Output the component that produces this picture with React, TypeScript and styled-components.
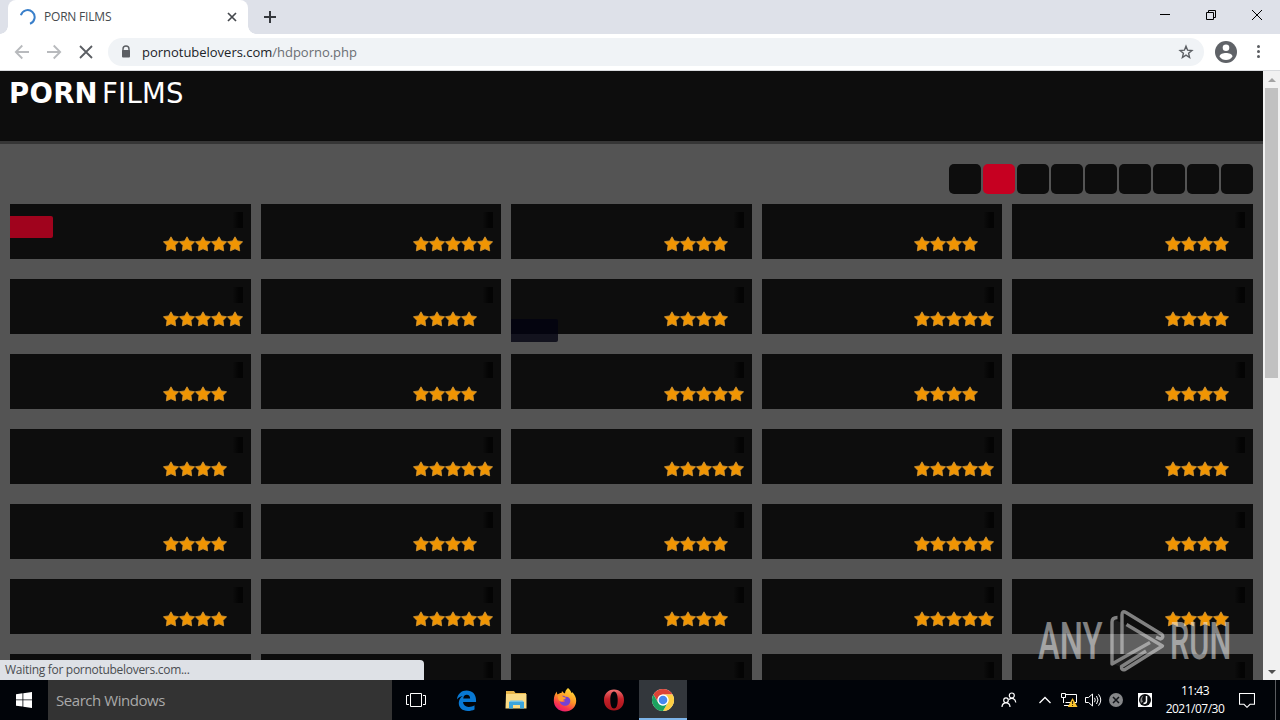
import React from "react";
import styled, { createGlobalStyle } from "styled-components";

const UI_FONT = `"Open Sans", "Noto Sans", sans-serif`;

const GlobalStyle = createGlobalStyle`
    * {
        box-sizing: border-box;
    }

    body {
        margin: 0;
        overflow: hidden;
        font-family: ${UI_FONT};
    }

    svg {
        display: block;
        flex: none;
    }
`;

const Desktop = styled.div`
    position: relative;
    display: flex;
    flex-direction: column;
    width: 1280px;
    height: 720px;
    overflow: hidden;
    background: #000;
`;

const TabStrip = styled.div`
    display: flex;
    flex: 0 0 34px;
    padding-left: 8px;
    background: #dee1e9;
`;

const Tab = styled.div`
    position: relative;
    display: flex;
    align-items: center;
    width: 240px;
    padding: 0 10px 0 12px;
    border-radius: 8px 8px 0 0;
    background: #fff;

    &::before,
    &::after {
        content: "";
        position: absolute;
        bottom: 0;
        width: 8px;
        height: 8px;
    }

    &::before {
        left: -8px;
        background: radial-gradient(circle at 0 0, #dee1e9 7.5px, #fff 8px);
    }

    &::after {
        right: -8px;
        background: radial-gradient(circle at 100% 0, #dee1e9 7.5px, #fff 8px);
    }
`;

const TabTitle = styled.span`
    flex: 1;
    padding-left: 8px;
    font-size: 12px;
    line-height: 16px;
    letter-spacing: -0.2px;
    white-space: nowrap;
    color: #45494d;
`;

const NewTab = styled.div`
    display: flex;
    align-items: center;
    padding-left: 16px;
`;

const WindowControls = styled.div`
    display: flex;
    height: 29px;
    margin-left: auto;
`;

const WindowControl = styled.div`
    display: flex;
    align-items: center;
    justify-content: center;
    width: 46px;
`;

const Toolbar = styled.div`
    display: flex;
    align-items: center;
    flex: 0 0 37px;
    padding: 0 14px 1px 14px;
    border-bottom: 1px solid #d8dadd;
    background: #fff;
`;

const NavButtons = styled.div`
    display: flex;
    gap: 16px;
`;

const AddressBar = styled.div`
    display: flex;
    align-items: center;
    flex: 1;
    height: 28px;
    margin: 0 11px 0 14px;
    padding: 0 10px 0 12px;
    border-radius: 14px;
    background: #f0f3f6;
`;

const Url = styled.span`
    flex: 1;
    padding-left: 10px;
    font-size: 13px;
    line-height: 18px;
    letter-spacing: -0.02px;
    white-space: nowrap;
    color: #6a6e73;
`;

const UrlHost = styled.span`
    color: #202328;
`;

const MenuDots = styled.div`
    display: flex;
    flex-direction: column;
    gap: 2px;
    margin-left: 20px;
    padding-right: 6px;
`;

const MenuDot = styled.i`
    width: 3px;
    height: 3px;
    border-radius: 50%;
    background: #5a5d61;
`;

const Viewport = styled.div`
    display: flex;
    flex: 1;
    min-height: 0;
`;

const Site = styled.main`
    flex: 1;
    min-width: 0;
    overflow: hidden;
    background: #545454;
`;

const SiteHeader = styled.header`
    height: 73px;
    padding: 6px 8px;
    border-bottom: 3px solid #363636;
    background: #0d0d0d;
`;

const SiteLogo = styled.div`
    display: flex;
    gap: 4px;
    padding-left: 1px;
    font-family: "DejaVu Sans", sans-serif;
    font-size: 27.5px;
    line-height: 32px;
    color: #fff;
`;

const LogoStrong = styled.b`
    letter-spacing: 0.3px;
`;

const LogoLight = styled.span`
    letter-spacing: 0.3px;
`;

const Pagination = styled.nav`
    display: flex;
    justify-content: flex-end;
    gap: 2px;
    padding: 20px 10px 10px;
`;

const PageButton = styled.span<{ $active?: boolean }>`
    width: 32px;
    height: 30px;
    border-radius: 5px;
    background: ${({ $active }) => ($active ? "#c60021" : "#0d0d0d")};
`;

const CardGrid = styled.section`
    display: grid;
    grid-template-columns: repeat(5, 1fr);
    gap: 20px 10px;
    padding: 0 10px;
`;

const Card = styled.article`
    position: relative;
    display: flex;
    flex-direction: column;
    align-items: flex-end;
    height: 55px;
    padding: 8px 8px 0 0;
    background: #0d0d0d;
`;

const Duration = styled.div`
    width: 10px;
    height: 16px;
    background: linear-gradient(90deg, #0c0c0c, #040404 60%);
`;

const Rating = styled.div`
    display: flex;
    width: 80px;
    margin-top: 8px;
`;

const CardLabel = styled.div<{ $tone: "red" | "navy" }>`
    position: absolute;
    left: 0;
    top: ${({ $tone }) => ($tone === "red" ? 12 : 40)}px;
    width: ${({ $tone }) => ($tone === "red" ? 43 : 47)}px;
    height: ${({ $tone }) => ($tone === "red" ? 22 : 23)}px;
    border-radius: 0 2px 2px 0;
    background: ${({ $tone }) => ($tone === "red" ? "#a0031d" : "rgba(2, 3, 16, 0.8)")};
`;

const Scrollbar = styled.div`
    display: flex;
    flex-direction: column;
    align-items: center;
    flex: 0 0 17px;
    background: #f1f1f1;
`;

const ScrollArrow = styled.div`
    display: flex;
    align-items: center;
    justify-content: center;
    height: 17px;
`;

const ScrollThumb = styled.div`
    width: 13px;
    height: 290px;
    margin-bottom: auto;
    background: #c1c1c1;
`;

const StatusBubble = styled.div`
    position: absolute;
    left: 0;
    bottom: 40px;
    width: 424px;
    height: 20px;
    padding-left: 5px;
    border-radius: 0 4px 0 0;
    background: #dee1e6;
    font-size: 12px;
    line-height: 20px;
    letter-spacing: -0.29px;
    color: #4a4d51;
`;

const Watermark = styled.div`
    position: absolute;
    left: 1038px;
    top: 609px;
    display: flex;
    opacity: 0.5;
`;

const WatermarkWord = styled.span<{ $width: number; $scale: number }>`
    display: block;
    width: ${({ $width }) => $width}px;
    font-family: Roboto, sans-serif;
    font-size: 52px;
    font-weight: 500;
    line-height: 66px;
    white-space: nowrap;
    color: #f4f4f4;
    transform: scaleX(${({ $scale }) => $scale});
    transform-origin: 0 0;
`;

const WatermarkMark = styled.div`
    margin: 0 4px 0 8px;
`;

const Taskbar = styled.footer`
    display: flex;
    flex: 0 0 40px;
    background: #010409;
`;

const TaskButton = styled.div<{ $active?: boolean }>`
    display: flex;
    align-items: center;
    justify-content: center;
    width: ${({ $active }) => ($active ? 48 : 49)}px;
    margin-left: ${({ $active }) => ($active ? 1 : 0)}px;
    border-bottom: ${({ $active }) => ($active ? "2px solid #7db4e8" : "none")};
    padding-top: ${({ $active }) => ($active ? 2 : 0)}px;
    background: ${({ $active }) => ($active ? "#33373c" : "transparent")};
`;

const StartButton = styled(TaskButton)`
    width: 48px;
`;

const TaskViewButton = styled(TaskButton)`
    width: 48px;
    margin-right: 2px;
`;

const SearchBox = styled.div`
    width: 344px;
    padding-left: 8px;
    background: #333;
    font-size: 15px;
    line-height: 40px;
    letter-spacing: -0.45px;
    color: #a9a9a9;
`;

const Tray = styled.div`
    display: flex;
    align-items: center;
    margin-left: auto;
`;

const TrayIcon = styled.div<{ $gap: number }>`
    margin-right: ${({ $gap }) => $gap}px;
`;

const Clock = styled.div`
    width: 60px;
    margin-right: 14px;
    font-size: 12px;
    line-height: 18px;
    letter-spacing: -0.5px;
    text-align: center;
    white-space: nowrap;
    color: #fff;
`;

const ShowDesktop = styled.div`
    width: 5px;
    height: 40px;
    border-left: 1px solid #5a5c60;
`;

const Star = () => (
    <svg width="16" height="16" viewBox="0 0 16 16">
        <path
            d="M8 .8 10.400 4.900 15.600 5.700 12 9.500 12.700 14.900 8 12.800 3.300 14.900 4 9.500 .4 5.700 5.600 4.900Z"
            fill="#f09503"
            stroke="#cf9538"
            strokeWidth=".8"
        />
    </svg>
);

const EdgeIcon = () => (
    <svg width="21" height="21" viewBox="0 0 22 22">
        <path
            d="M1 10C1.500 4 6 .5 11 .5c6 0 10 4 10 10v2.200H7.400c.2 3.200 2.600 5 6 5 2.300 0 4.300-.7 6-1.700v4.300c-2 1-4.300 1.600-7 1.600-5.800 0-9.500-3.400-9.500-8.300 0-3 1.600-5.700 4.200-7.300C4.400 6.900 2.400 8 1 10Zm6.600-1.100h7.200c0-2.500-1.300-4-3.500-4s-3.600 1.700-3.700 4Z"
            fill="#0878d3"
        />
    </svg>
);

const FolderIcon = () => (
    <svg width="22" height="20" viewBox="0 0 22 20">
        <path d="M1 1h8l1.500 2H21v4H1Z" fill="#e8b64a" />
        <path d="M1 4h20.500v14.500H.5Z" fill="#fbdc86" />
        <path d="M4 12h15v6.500h-4V15H8v3.500H4Z" fill="#3ba5dd" />
        <path d="M4 12h15l-1.500-1.500h-12Z" fill="#72c4e9" />
    </svg>
);

const FirefoxIcon = () => (
    <svg width="24" height="24" viewBox="0 0 24 24">
        <defs>
            <linearGradient id="fox" x1=".8" y1="0" x2=".3" y2="1">
                <stop offset="0" stopColor="#ffe33b" />
                <stop offset=".48" stopColor="#ff9526" />
                <stop offset=".78" stopColor="#fa374c" />
                <stop offset="1" stopColor="#e51776" />
            </linearGradient>
        </defs>
        <path
            d="M15 0c2 1.600 3 3.200 3.500 5l1-.7c2.200 2.400 3.700 5.200 3.700 8.400C23.200 19 18.400 23.500 12 23.500S.8 19 .8 12.600c0-3.800 1-6.500 3-9 0 1.300.3 2.200.8 3C5.600 5.500 7 5 8.500 5L9 3c.8 1 1.700 2 3 2.500C12 3.500 13.200 1.500 15 0Z"
            fill="url(#fox)"
        />
        <path d="M9 8c1.300-.5 2.500 0 3.200.8C15 8.200 17.500 10 17.300 12.800c0 3-2.300 5-5.200 5-3.500 0-5.400-2.500-5.300-5 1.600 1.600 3.800 1.600 5.400.2-1.700-.2-2.700-1.600-3.200-5Z" fill="#7542d3" />
        <path d="M5 8c2-1 4.300-.6 5.700 1l2.200.8c-.4 1.500-2 1.600-2.800 2.200.2 1.200-1.600 1.700-3 1.200-1.500-.6-2.400-2.500-2.100-5.200Z" fill="#ff9d2d" />
    </svg>
);

const OperaIcon = () => (
    <svg width="22" height="22" viewBox="0 0 22 22">
        <defs>
            <linearGradient id="opera" x1="0" y1="0" x2="0" y2="1">
                <stop offset="0" stopColor="#f17474" />
                <stop offset=".45" stopColor="#c52129" />
                <stop offset="1" stopColor="#a5141b" />
            </linearGradient>
        </defs>
        <path
            d="M11 .5c6 0 10 4.500 10 10.500s-4 10.500-10 10.500S1 17 1 11 5 .5 11 .5Zm0 2C8.600 2.500 7.300 6 7.300 11s1.300 8.500 3.700 8.500 3.700-3.500 3.700-8.500-1.300-8.500-3.700-8.500Z"
            fill="url(#opera)"
            fillRule="evenodd"
        />
    </svg>
);

const ChromeIcon = () => (
    <svg width="24" height="24" viewBox="0 0 24 24">
        <circle cx="12" cy="12" r="11" fill="#fff" />
        <path d="M12 1a11 11 0 0 1 9.530 5.500H12A5.500 5.500 0 0 0 7.240 14.750L2.470 6.500A11 11 0 0 1 12 1Z" fill="#dc4437" />
        <path d="M21.530 6.500A11 11 0 0 1 12 23l4.760-8.250A5.500 5.500 0 0 0 12 6.500Z" fill="#fdce43" />
        <path d="M12 23A11 11 0 0 1 2.470 6.500l4.770 8.250a5.500 5.500 0 0 0 9.520 0Z" fill="#1ba260" />
        <circle cx="12" cy="12" r="5.500" fill="#fff" />
        <circle cx="12" cy="12" r="4.300" fill="#4788ef" />
    </svg>
);

const PlayMark = () => (
    <svg
        width="58"
        height="66"
        viewBox="0 0 58 66"
        fill="none"
        stroke="#f4f4f4"
        strokeWidth="3.400"
        strokeLinejoin="round"
    >
        <path d="M18 16 55 37 16 59 5 55V10Z" fill="#fff" fillOpacity=".14" stroke="none" />
        <path d="M9.500 8.500Q4 8.500 4 13v42L42 33.500" />
        <path d="M14 45V6q0-5 4-2.500l36 22q2 3-1.500 4.500L48 28" />
        <path d="M18.500 15.500 54.500 37 17 60.500q-4 1-3.500-3L38 42" />
    </svg>
);

const ratings = [
    [5, 5, 4, 4, 4],
    [5, 4, 4, 5, 4],
    [4, 4, 5, 4, 4],
    [4, 5, 5, 5, 4],
    [4, 4, 4, 5, 4],
    [4, 5, 4, 5, 4],
    [4, 4, 4, 4, 4],
].flat();

const App = () => (
    <Desktop>
        <GlobalStyle />
        <TabStrip>
            <Tab>
                <svg width="16" height="16" viewBox="0 0 16 16" fill="none" stroke="#397fca" strokeWidth="2">
                    <path d="M.9 6.200A7 7 0 1 1 10 14.700" />
                </svg>
                <TabTitle>PORN FILMS</TabTitle>
                <svg width="12" height="12" viewBox="0 0 12 12" stroke="#45484d" strokeWidth="1.700">
                    <path d="m2 2 8 8M10 2l-8 8" />
                </svg>
            </Tab>
            <NewTab>
                <svg width="12" height="12" viewBox="0 0 12 12" stroke="#35383d" strokeWidth="2">
                    <path d="M0 6h12M6 0v12" />
                </svg>
            </NewTab>
            <WindowControls>
                <WindowControl>
                    <svg width="10" height="10" stroke="#000">
                        <path d="M0 4.500h10" />
                    </svg>
                </WindowControl>
                <WindowControl>
                    <svg width="10" height="10" fill="none" stroke="#000">
                        <path d="M.5 2.500h7v7h-7ZM2.500 2.500v-2h7v7h-2" />
                    </svg>
                </WindowControl>
                <WindowControl>
                    <svg width="10" height="10" stroke="#000">
                        <path d="m0 0 10 10M10 0 0 10" />
                    </svg>
                </WindowControl>
            </WindowControls>
        </TabStrip>
        <Toolbar>
            <NavButtons>
                <svg width="16" height="16" viewBox="0 0 16 16" fill="none" stroke="#b8babd" strokeWidth="1.800">
                    <path d="M15 8H2M8.300 1.500 1.800 8l6.500 6.500" />
                </svg>
                <svg width="16" height="16" viewBox="0 0 16 16" fill="none" stroke="#b8babd" strokeWidth="1.800">
                    <path d="M1 8h13M7.700 1.500 14.200 8l-6.500 6.500" />
                </svg>
                <svg width="16" height="16" viewBox="0 0 16 16" stroke="#5b5e63" strokeWidth="1.800">
                    <path d="m2 2 12 12M14 2 2 14" />
                </svg>
            </NavButtons>
            <AddressBar>
                <svg width="12" height="14" viewBox="0 0 12 14">
                    <path d="M3 6V4a3 3 0 0 1 6 0v2" fill="none" stroke="#5b5e63" strokeWidth="1.400" />
                    <rect x="2" y="5" width="8" height="7.500" rx="1" fill="#5b5e63" />
                </svg>
                <Url>
                    <UrlHost>pornotubelovers.com</UrlHost>/hdporno.php
                </Url>
                <svg width="16" height="16" viewBox="0 0 16 16" fill="none" stroke="#5b5e63" strokeWidth="1.400">
                    <path d="m8 2.200 1.600 4 4.300.3-3.300 2.800 1 4.200L8 11.200l-3.600 2.300 1-4.200-3.300-2.800 4.300-.3Z" />
                </svg>
            </AddressBar>
            <svg width="22" height="22" viewBox="0 0 22 22">
                <circle cx="11" cy="11" r="11" fill="#5f6267" />
                <circle cx="11" cy="6.700" r="3.300" fill="#fff" />
                <path d="M4.500 15.500C5 12.800 8 12 11 12s6 .8 6.500 3.500C16 18 13.700 19 11 19s-5-1-6.500-3.500Z" fill="#fff" />
            </svg>
            <MenuDots>
                <MenuDot />
                <MenuDot />
                <MenuDot />
            </MenuDots>
        </Toolbar>
        <Viewport>
            <Site>
                <SiteHeader>
                    <SiteLogo>
                        <LogoStrong>PORN</LogoStrong>
                        <LogoLight>FILMS</LogoLight>
                    </SiteLogo>
                </SiteHeader>
                <Pagination>
                    {Array.from({ length: 9 }, (_, i) => (
                        <PageButton key={i} $active={i === 1} />
                    ))}
                </Pagination>
                <CardGrid>
                    {ratings.map((rating, i) => (
                        <Card key={i}>
                            <Duration />
                            <Rating>
                                {Array.from({ length: rating }, (_, n) => (
                                    <Star key={n} />
                                ))}
                            </Rating>
                            {i === 0 && <CardLabel $tone="red" />}
                            {i === 7 && <CardLabel $tone="navy" />}
                        </Card>
                    ))}
                </CardGrid>
            </Site>
            <Scrollbar>
                <ScrollArrow>
                    <svg width="8" height="4">
                        <path d="M0 4 4 0l4 4Z" fill="#a3a3a3" />
                    </svg>
                </ScrollArrow>
                <ScrollThumb />
                <ScrollArrow>
                    <svg width="8" height="4">
                        <path d="m0 0 4 4 4-4Z" fill="#505050" />
                    </svg>
                </ScrollArrow>
            </Scrollbar>
        </Viewport>
        <Taskbar>
            <StartButton>
                <svg width="16" height="16" viewBox="0 0 16 16" fill="#fff">
                    <path d="M0 2.200 6.500 1.300v6.200H0ZM7.300 1.200 16 0v7.500H7.300ZM0 8.300h6.500v6.300L0 13.700ZM7.300 8.300H16V16l-8.700-1.200Z" />
                </svg>
            </StartButton>
            <SearchBox>Search Windows</SearchBox>
            <TaskViewButton>
                <svg width="20" height="14" fill="none" stroke="#fff">
                    <path d="M4.500.5h11v13h-11ZM3 2.500H.5v9H3M17 2.500h2.500v9H17" />
                </svg>
            </TaskViewButton>
            <TaskButton>
                <EdgeIcon />
            </TaskButton>
            <TaskButton>
                <FolderIcon />
            </TaskButton>
            <TaskButton>
                <FirefoxIcon />
            </TaskButton>
            <TaskButton>
                <OperaIcon />
            </TaskButton>
            <TaskButton $active>
                <ChromeIcon />
            </TaskButton>
            <Tray>
                <TrayIcon $gap={22}>
                    <svg width="16" height="16" viewBox="0 0 16 16" fill="none" stroke="#fff" strokeWidth="1.200">
                        <circle cx="10.800" cy="3.500" r="2.500" />
                        <circle cx="5" cy="8.200" r="2.300" />
                        <path d="M1 15c0-2.500 1.600-4.200 4-4.200S9 12.500 9 15M8 7.500c2.700-2.300 6.500-1 6.800 3" />
                    </svg>
                </TrayIcon>
                <TrayIcon $gap={10}>
                    <svg width="12" height="8" fill="none" stroke="#fff" strokeWidth="1.300">
                        <path d="m.5 7 5.500-5.500L11.500 7" />
                    </svg>
                </TrayIcon>
                <TrayIcon $gap={7}>
                    <svg width="17" height="16" viewBox="0 0 17 16" fill="none" stroke="#fff">
                        <path d="M5 2.500h10.500v8H4.500M.5 1.500h4v4h-4ZM2.500 5.500v5.500M3 13.500h5" />
                        <path d="m11.500 6 5 9H6.800Z" fill="#fac32d" stroke="none" />
                        <path d="M11.600 9v3M11.600 13v1" stroke="#29200b" />
                    </svg>
                </TrayIcon>
                <TrayIcon $gap={7}>
                    <svg width="17" height="14" viewBox="0 0 17 14" fill="none" stroke="#fff">
                        <path d="M.5 4.500h3l4-3.500v12l-4-3.500h-3ZM9.500 4.800q1.500 2.200 0 4.400M11.500 3q3 4 0 8M13.500 1.300q4.500 5.700 0 11.400" />
                    </svg>
                </TrayIcon>
                <TrayIcon $gap={15}>
                    <svg width="14" height="14" viewBox="0 0 14 14">
                        <circle cx="7" cy="7" r="7" fill="#858789" />
                        <path d="m4 4 6 6M10 4l-6 6" stroke="#12151a" strokeWidth="1.500" />
                    </svg>
                </TrayIcon>
                <TrayIcon $gap={13}>
                    <svg width="14" height="14" viewBox="0 0 14 14">
                        <path d="M0 0h14v14H0Z" fill="#fff" />
                        <circle cx="7" cy="7" r="6" fill="#090b0e" />
                        <path d="M8.500 3v5q0 2.500-3 2.500" fill="none" stroke="#fff" strokeWidth="1.500" />
                        <path d="M3 10Q1 5 5.500 2.500 3 6 5 8.500Z" fill="#888" />
                    </svg>
                </TrayIcon>
                <Clock>
                    11:43
                    <br />
                    2021/07/30
                </Clock>
                <TrayIcon $gap={20}>
                    <svg width="16" height="16" viewBox="0 0 16 16" fill="none" stroke="#fff" strokeWidth="1.100">
                        <path d="M.5 1.500h15v10.800h-4.500L8 15.300l-3-3H.5Z" />
                    </svg>
                </TrayIcon>
                <ShowDesktop />
            </Tray>
        </Taskbar>
        <StatusBubble>Waiting for pornotubelovers.com...</StatusBubble>
        <Watermark>
            <WatermarkWord $width={62} $scale={0.63}>
                ANY
            </WatermarkWord>
            <WatermarkMark>
                <PlayMark />
            </WatermarkMark>
            <WatermarkWord $width={62} $scale={0.59}>
                RUN
            </WatermarkWord>
        </Watermark>
    </Desktop>
);

export default App;
